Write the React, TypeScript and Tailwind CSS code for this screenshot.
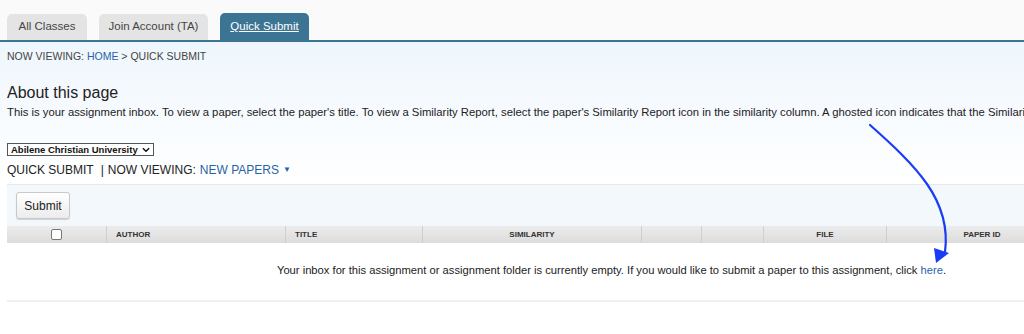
import React from 'react';

const columns: { label: string; width: string; align: string }[] = [
  { label: 'AUTHOR', width: 'w-[179px]', align: 'text-left pl-[9px]' },
  { label: 'TITLE', width: 'w-[137px]', align: 'text-left pl-[9px]' },
  { label: 'SIMILARITY', width: 'w-[219px]', align: 'text-center' },
  { label: '', width: 'w-[60px]', align: 'text-center' },
  { label: '', width: 'w-[62px]', align: 'text-center' },
  { label: 'FILE', width: 'w-[123px]', align: 'text-center' },
  { label: 'PAPER ID', width: 'w-[190px]', align: 'text-center' },
];

export default function App() {
  return (
    <div className="relative w-[1024px] h-[334px] overflow-hidden bg-white font-['Liberation_Sans',Arial,sans-serif] text-[#333]">
      {/* Tabs */}
      <div className="bg-[#fafafa] h-[40px] flex items-end gap-3 px-[7px]">
        <div className="h-[26px] w-[80px] rounded-t-[5px] bg-[#e4e4e4] text-[#444] text-[11.5px] flex items-center justify-center">
          All Classes
        </div>
        <div className="h-[26px] w-[109px] rounded-t-[5px] bg-[#e4e4e4] text-[#444] text-[11.5px] flex items-center justify-center">
          Join Account (TA)
        </div>
        <div className="h-[27px] w-[89px] rounded-t-[5px] bg-[#3b7593] text-white text-[11.5px] underline flex items-center justify-center">
          Quick Submit
        </div>
      </div>
      <div className="h-[2px] bg-[#3b7593]" />

      <div className="bg-gradient-to-b from-[#eef6fd] to-white h-[140px]">
        <div className="px-[7px] pt-[8px] text-[10.5px] leading-[12px] text-[#444]">
          NOW VIEWING: <span className="text-[#2a62a8]">HOME</span> &gt; QUICK SUBMIT
        </div>

        <h1 className="px-[7px] mt-[21px] text-[16px] leading-[20px] text-[#222]">About this page</h1>
        <p className="pl-[7px] mt-[2px] text-[11.3px] leading-[14px] whitespace-nowrap text-[#222]">
          This is your assignment inbox. To view a paper, select the paper's title. To view a Similarity Report, select the paper's Similarity Report icon in the similarity column. A ghosted icon indicates that the Similarity Report has not yet been generated.
        </p>

        <div className="px-[7px] mt-[21px] leading-none">
          <div className="inline-flex items-center gap-1 border border-[#555] bg-white h-[13px] px-[3px] text-[9.5px] font-bold text-[#111] leading-none">
            Abilene Christian University
            <svg width="8" height="6" viewBox="0 0 9 6"><path d="M1 1l3.5 3.5L8 1" stroke="#111" strokeWidth="1.6" fill="none" /></svg>
          </div>
        </div>

        <div className="px-[7px] mt-[7px] text-[12px] leading-[14px] text-[#222] flex items-center">
          <span>QUICK SUBMIT</span>
          <span className="ml-[7px] mr-[4px]">|</span>
          <span>NOW VIEWING:</span>
          <span className="ml-[4px] text-[#2a62a8]">NEW PAPERS</span>
          <span className="ml-[4px] text-[#2a62a8] text-[8px]">▼</span>
        </div>
      </div>

      {/* Toolbar + table */}
      <div className="ml-[7px] mt-[2px] overflow-hidden">
        <div className="h-[42px] bg-[#f2f8fc] border-t border-[#e6e9ec] flex items-center pl-[9px]">
          <button className="h-[27px] w-[54px] rounded-[3px] border border-[#c8c8c8] bg-gradient-to-b from-white to-[#ececec] text-[12px] text-[#222] shadow-[0_1px_1px_rgba(0,0,0,0.15)]">
            Submit
          </button>
        </div>
        <div className="flex h-[17px] bg-gradient-to-b from-[#ececec] to-[#dcdcdc] text-[8px] font-bold text-[#333]">
          <div className="w-[100px] flex-none flex items-center justify-center border-r border-[#cfcfcf]">
            <div className="w-[11px] h-[11px] rounded-[2px] border border-[#777] bg-white" />
          </div>
          {columns.map((c, i) => (
            <div
              key={i}
              className={`${c.width} ${c.align} flex-none leading-[17px] ${i < columns.length - 1 ? 'border-r border-[#cfcfcf]' : ''}`}
            >
              {c.label}
            </div>
          ))}
        </div>
        <p className="text-center text-[11.2px] text-[#222] mt-[19px] pl-[192px]">
          Your inbox for this assignment or assignment folder is currently empty. If you would like to submit a paper to this assignment, click{' '}
          <span className="text-[#2a62a8]">here</span>.
        </p>
        <div className="mt-[21px] h-[2px] bg-[#f0f0f0]" />
      </div>

      {/* Annotation arrow */}
      <svg className="absolute left-0 top-0 pointer-events-none" width="1024" height="334" viewBox="0 0 1024 334">
        <path d="M870 125 C 915 165, 952 200, 945 252" stroke="#1a3cf5" strokeWidth="2.2" fill="none" strokeLinecap="round" />
        <path d="M936 263 L 934 248 L 949 253 Z" fill="#1a3cf5" />
      </svg>
    </div>
  );
}
